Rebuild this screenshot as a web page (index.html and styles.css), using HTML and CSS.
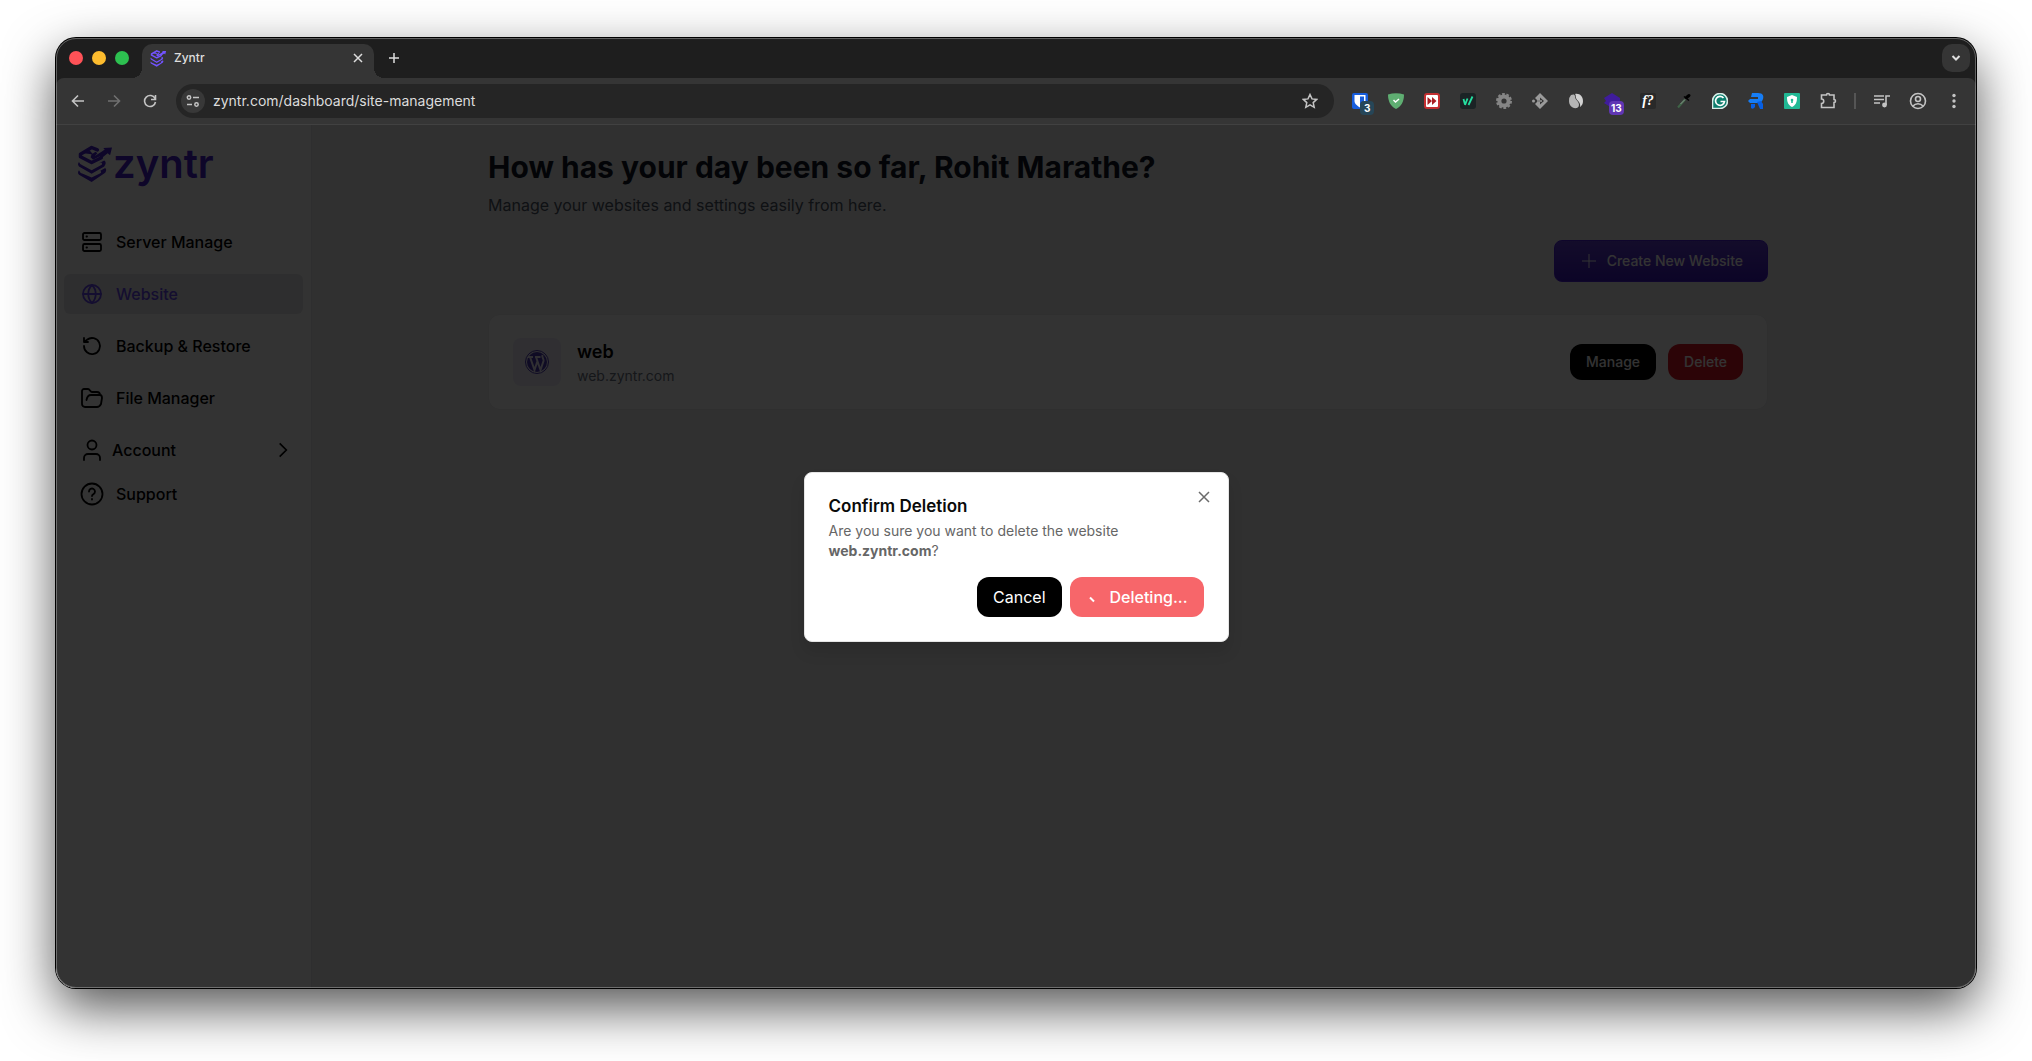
FILE: index.html
```html
<!DOCTYPE html>
<html lang="en">

<head>
  <meta charset="UTF-8">
  <meta name="viewport" content="width=device-width, initial-scale=1.0">
  <title>Zyntr</title>
  <link rel="stylesheet" href="styles.css">
</head>

<body>
  <!-- Shared logo mark -->
  <svg class="symbols" aria-hidden="true">
    <symbol id="zyntr-mark" viewBox="0 0 36 38">
      <path fill="none" stroke="currentColor" stroke-width="3.500" stroke-linejoin="round" stroke-linecap="round" d="M20 4.500L14 2 2.500 9v2.500L14 17.500l10-5" />
      <path fill="currentColor" d="M6 8l6-3 3 3.500 3-2 2 1.500-3 3 8-5 2.500-2L26 2.500 35 2l-2 8-2.500-2-5 4-4 1 1-2-7 3.500L13 12l1-3z" />
      <path fill="currentColor" d="M1 17q1 3 4 3.500l9 5 9-5q3-1 1-3l-3 1 6-3q3 2 0 6L14 29 1 21.500q-2-2 0-4.500z" />
      <path fill="currentColor" d="M1 25.500q1 3 4 3.500l9 4 8-4q3-1 1-3l5-3q2 2 0 5L14 37.500 1 30q-2-2 0-4.500z" />
    </symbol>
  </svg>

  <div class="window">
    <!-- Tab strip -->
    <header class="tab-strip">
      <div class="lights">
        <span class="light red"></span>
        <span class="light yellow"></span>
        <span class="light green"></span>
      </div>
      <div class="tab">
        <svg class="favicon"><use href="#zyntr-mark" /></svg>
        <span class="tab-title">Zyntr</span>
        <button class="tab-close" aria-label="Close tab">
          <svg width="10" height="10" viewBox="0 0 10 10"><path d="M1 1l8 8M9 1L1 9" /></svg>
        </button>
      </div>
      <button class="tab-new" aria-label="New tab">
        <svg width="12" height="12" viewBox="0 0 12 12"><path d="M6 1v10M1 6h10" /></svg>
      </button>
      <button class="tab-search" aria-label="Search tabs">
        <svg width="10" height="8" viewBox="0 0 10 8"><path d="M1.500 2L5 5.500 8.500 2" /></svg>
      </button>
    </header>

    <!-- Toolbar -->
    <div class="toolbar">
      <button class="tool" aria-label="Back">
        <svg width="14" height="14" viewBox="0 0 14 14"><path d="M13 7H2M7 1.500L1.500 7 7 12.500" /></svg>
      </button>
      <button class="tool dim" aria-label="Forward">
        <svg width="14" height="14" viewBox="0 0 14 14"><path d="M1 7h11M7 1.500L12.500 7 7 12.500" /></svg>
      </button>
      <button class="tool" aria-label="Reload">
        <svg width="14" height="14" viewBox="0 0 14 14"><path d="M12 4.500A5.500 5.500 0 1 0 12.500 8M12.500 1v4.500H8" /></svg>
      </button>
      <div class="address">
        <button class="site-info" aria-label="Site information">
          <svg width="14" height="12" viewBox="0 0 14 12"><circle cx="3" cy="2.500" r="1.700" /><path d="M7 2.500h6M1 9.500h5" /><circle cx="10.500" cy="9.500" r="1.700" /></svg>
        </button>
        <input class="url" type="text" aria-label="Address" value="zyntr.com/dashboard/site-management">
        <button class="bookmark" aria-label="Bookmark">
          <svg width="16" height="16" viewBox="0 0 16 16"><path d="M8 1.500l2 4.400 4.700.5-3.500 3.200 1 4.700L8 11.900l-4.200 2.400 1-4.700L1.300 6.400 6 5.900z" /></svg>
        </button>
      </div>
      <div class="extensions">
        <button class="tool" aria-label="Password vault">
          <svg class="fill" viewBox="0 0 16 16"><rect width="16" height="16" rx="2" fill="#175ddc" /><path fill="#fff" d="M2.500 2h11v6c0 3-3 5-5.500 6.500C5.500 13 2.500 11 2.500 8z" /><path fill="#175ddc" d="M8 3.500h4V8c0 2-2 3.500-4 4.500z" /></svg>
          <span class="badge navy">3</span>
        </button>
        <button class="tool" aria-label="Ad blocker">
          <svg class="fill" viewBox="0 0 16 16"><path fill="#5fae72" d="M0 1.500Q8-1 16 1.500C16 9 13 13.500 8 16 3 13.500 0 9 0 1.500z" /><path fill="none" stroke="#fff" stroke-width="1.500" d="M5.500 7l2 2 3.500-3" /></svg>
        </button>
        <button class="tool" aria-label="Fast forward">
          <svg class="fill" viewBox="0 0 16 16"><rect width="16" height="16" rx="3" fill="#c32f31" /><rect x="2" y="2" width="12" height="12" rx="1" fill="#fff" /><path fill="#a81e22" d="M3.500 4L8 8l-4.500 4zM8 4l4.500 4L8 12z" /></svg>
        </button>
        <button class="tool" aria-label="Checker">
          <svg class="fill" viewBox="0 0 16 16"><rect width="16" height="16" rx="3" fill="#1b2325" /><path fill="none" stroke="#25dfa0" stroke-width="1.800" d="M3.500 6l1.500 5.500M5 12l2.500-6.500M8.500 12L12.500 3.500" /></svg>
        </button>
        <button class="tool" aria-label="Options">
          <svg class="fill" viewBox="0 0 16 16"><circle cx="8" cy="8" r="7" fill="none" stroke="#858585" stroke-width="2" stroke-dasharray="2.750 1.650" /><circle cx="8" cy="8" r="4.600" fill="none" stroke="#858585" stroke-width="4" /></svg>
        </button>
        <button class="tool" aria-label="Redirects">
          <svg class="fill" viewBox="0 0 16 16"><path fill="#9a9a9a" d="M8 0l8 8-8 8-5-5 2-2h3v2.500L12 8 8 4.500V7H5L3 5z" /><circle cx="1.500" cy="8" r="1.500" fill="#9a9a9a" /><path stroke="#9a9a9a" stroke-width="1.500" d="M5 8h5" /></svg>
        </button>
        <button class="tool" aria-label="Rank data">
          <svg class="fill" viewBox="0 0 16 16"><path fill="#b5b5b5" d="M3 2c2-1 4-1 4 1.500C7 7 11 8 11 12q0 2-2 3C4 16 1 12 1 8q0-4 2-6z" /><path fill="#d2d2d2" d="M7 1c5-1 8 3 8 7 0 3-1 4.500-3 6 1-5-3-6-4-9-.4-1.500 0-3-1-4z" /></svg>
        </button>
        <button class="tool" aria-label="Layers">
          <svg class="fill" viewBox="0 0 16 16"><path fill="#3f1c9c" d="M8 0l8 5v5l-8 5-8-5 2-2-2-3z" /></svg>
          <span class="badge violet">13</span>
        </button>
        <button class="tool" aria-label="Font finder"><span class="font-ext">f?</span></button>
        <button class="tool" aria-label="Colour picker">
          <svg class="fill" viewBox="0 0 16 16"><path stroke="#3f6447" stroke-width="2" d="M2 14.500l7-8" /><path stroke="#999" stroke-width=".8" d="M4.500 11L9 6.500" /><path stroke="#000" stroke-width="3" stroke-linecap="round" d="M10.500 4.500l2.500-2" /><path stroke="#000" stroke-width="1.500" d="M8 3.500l5 4" /></svg>
        </button>
        <button class="tool" aria-label="Grammar">
          <svg class="fill" viewBox="0 0 16 16"><path fill="#0c7d6c" stroke="#d9eee9" d="M8 .5A7.500 7.500 0 1 1 8 15.500H.5V8A7.500 7.500 0 0 1 8 .5z" /><path fill="none" stroke="#fff" stroke-width="1.700" d="M11.500 5A4.500 4.500 0 1 0 12.500 8.500H8.500" /></svg>
        </button>
        <button class="tool" aria-label="Recorder">
          <svg class="fill" viewBox="0 0 16 16"><path fill="#167df5" d="M4 0h6c5 0 6 3 5 6-1 3-3 4-5 4H2L0 8l2-2h8V4H3z" /><path fill="#075fe4" d="M3 11h4v3q-2 3-4 1zM9 9l4-1 2 3v5h-3z" /></svg>
        </button>
        <button class="tool" aria-label="Privacy shield">
          <svg class="fill" viewBox="0 0 16 16"><rect width="16" height="16" rx="1" fill="#21b894" /><path fill="#fff" d="M3 4l5-2 5 2c0 5-1 8-5 10C4 12 3 9 3 4z" /><circle cx="8" cy="7" r="1.300" fill="#21b894" /><path stroke="#21b894" d="M8 7v3" /></svg>
        </button>
        <button class="tool" aria-label="Extensions">
          <svg width="18" height="18" viewBox="0 0 18 18"><path d="M2.500 3h5a1.500 1.500 0 0 1 3 0H15v4.500a1.500 1.500 0 0 1 0 3v5H2.500v-4a2.200 2.200 0 0 0 0-4.500z" /></svg>
        </button>
      </div>
      <span class="divider"></span>
      <button class="tool" aria-label="Media">
        <svg width="16" height="16" viewBox="0 0 16 16"><path d="M0 3h10M0 6.500h10M0 10h6M12 12V3h4" /><circle cx="10.500" cy="12" r="1.600" fill="currentColor" /></svg>
      </button>
      <button class="tool" aria-label="Profile">
        <svg width="18" height="18" viewBox="0 0 18 18"><circle cx="9" cy="9" r="7.500" /><circle cx="9" cy="7" r="2.500" /><path d="M4 14c2.500-3 7.500-3 10 0" /></svg>
      </button>
      <button class="tool" aria-label="Menu">
        <svg class="fill" viewBox="0 0 16 16"><g fill="currentColor"><circle cx="8" cy="2.500" r="1.700" /><circle cx="8" cy="8" r="1.700" /><circle cx="8" cy="13.500" r="1.700" /></g></svg>
      </button>
    </div>

    <!-- Page -->
    <div class="page">
      <aside class="sidebar">
        <a class="logo" href="#" aria-label="Zyntr home">
          <svg class="logo-mark"><use href="#zyntr-mark" /></svg>
          <span class="logo-text">zyntr</span>
        </a>
        <nav class="nav">
          <a class="nav-link" href="#">
            <svg class="nav-icon" viewBox="0 0 24 24"><rect x="3" y="3" width="18" height="7" rx="1.500" /><rect x="3" y="14" width="18" height="7" rx="1.500" /><path d="M6.500 6.500h.5M6.500 17.500h.5" /></svg>
            Server Manage
          </a>
          <a class="nav-link active" href="#">
            <svg class="nav-icon" viewBox="0 0 24 24"><circle cx="12" cy="12" r="9" /><path d="M3 12h18M12 3c-5 5-5 13 0 18M12 3c5 5 5 13 0 18" /></svg>
            Website
          </a>
          <a class="nav-link" href="#">
            <svg class="nav-icon" viewBox="0 0 24 24"><path d="M4 12a8 8 0 1 0 3-6.200L4 8M4 4v4h4" /></svg>
            Backup &amp; Restore
          </a>
          <a class="nav-link" href="#">
            <svg class="nav-icon" viewBox="0 0 24 24"><path d="M5 21a3 3 0 0 1-3-3V5c0-1 1-2 2-2h4c2 0 2 3 4 3h5c2 0 3 1 3 3M5 21h12c2 0 3-1 4-3l1-6c0-2-1-3-2-3h-9c-3 0-4 2-4.500 5" /></svg>
            File Manager
          </a>
          <button class="nav-link nav-account">
            <svg class="nav-icon" viewBox="0 0 24 24"><circle cx="12" cy="7" r="4.500" /><path d="M4 22v-2a4 4 0 0 1 4-4h8a4 4 0 0 1 4 4v2" /></svg>
            Account
            <svg class="nav-chevron" viewBox="0 0 24 24"><path d="M8 4l8 8-8 8" /></svg>
          </button>
          <a class="nav-link" href="#">
            <svg class="nav-icon" viewBox="0 0 24 24"><circle cx="12" cy="12" r="10.500" /><path d="M9 9.500a3 3 0 1 1 4.500 2.600c-1.100.6-1.500 1-1.500 1.900M12 17v.5" /></svg>
            Support
          </a>
        </nav>
      </aside>

      <main class="main">
        <div class="container">
          <h1 class="greeting">How has your day been so far, Rohit Marathe?</h1>
          <p class="subtitle">Manage your websites and settings easily from here.</p>
          <button class="btn-create">
            <svg width="16" height="16" viewBox="0 0 16 16"><path d="M8 1v14M1 8h14" /></svg>
            Create New Website
          </button>
          <section class="site-card">
            <div class="site-icon">
              <svg width="24" height="24" viewBox="0 0 24 24"><circle cx="12" cy="12" r="11.500" fill="none" stroke="currentColor" /><circle cx="12" cy="12" r="10" fill="currentColor" stroke="none" /><path fill="none" stroke="#eeebfa" stroke-width="2" d="M3 7h5M10 7h5.500M5 7l4.500 13 3-9M11 7l4.500 13 3-9c.6-2-2-3.500-1-6" /></svg>
            </div>
            <div class="site-info-text">
              <h2 class="site-name">web</h2>
              <p class="site-domain">web.zyntr.com</p>
            </div>
            <button class="btn-small">Manage</button>
            <button class="btn-small danger">Delete</button>
          </section>
        </div>
      </main>

      <!-- Delete confirmation -->
      <div class="overlay">
        <div class="dialog" role="dialog" aria-modal="true" aria-labelledby="dialog-title">
          <button class="dialog-close" aria-label="Close">
            <svg width="12" height="12" viewBox="0 0 12 12"><path d="M1 1l10 10M11 1L1 11" /></svg>
          </button>
          <h2 class="dialog-title" id="dialog-title">Confirm Deletion</h2>
          <p class="dialog-text">Are you sure you want to delete the website <strong>web.zyntr.com</strong>?</p>
          <div class="dialog-actions">
            <button class="btn">Cancel</button>
            <button class="btn deleting" disabled>
              <svg width="16" height="16" viewBox="0 0 16 16"><path d="M4 8.500l4 4" /></svg>
              Deleting...
            </button>
          </div>
        </div>
      </div>
    </div>
  </div>
</body>

</html>
```
FILE: styles.css
```css
:root {
  --strip: #1e1e1e;
  --toolbar: #353535;
  --field: #252525;
  --icon: #c4c4c4;
  --brand: #6746ed;
  --brand-dark: #4620cc;
}

* {
  margin: 0;
  padding: 0;
  box-sizing: border-box;
}

body {
  display: flex;
  height: 100vh;
  padding: 38px 56px 73px;
  background: #fff;
  font-family: Inter, "Liberation Sans", sans-serif;
  font-size: 16px;
  line-height: 24px;
  overflow: hidden;
}

button,
input {
  font: inherit;
  color: inherit;
  background: none;
  border: none;
}

a {
  color: inherit;
  text-decoration: none;
}

svg {
  flex: none;
  fill: none;
  stroke: currentColor;
}

.symbols {
  position: absolute;
  width: 0;
  height: 0;
}

/* Window */
.window {
  position: relative;
  flex: 1;
  min-width: 0;
  display: flex;
  flex-direction: column;
  border-radius: 20px;
  background: var(--strip);
  box-shadow: 0 0 0 1px #000, 0 20px 52px rgba(0, 0, 0, 0.68);
}

.window::after {
  content: "";
  position: absolute;
  inset: 0;
  border: 1px solid rgba(255, 255, 255, 0.3);
  border-radius: 20px;
  pointer-events: none;
}

/* Tab strip */
.tab-strip {
  display: flex;
  align-items: center;
  height: 40px;
  padding: 0 6px 0 13px;
  color: #dedede;
}

.lights {
  display: flex;
  gap: 9px;
  margin-right: 13px;
}

.light {
  width: 14px;
  height: 14px;
  border-radius: 50%;
}

.red { background: #ff5257; }
.yellow { background: #fdbc2e; }
.green { background: #2dc050; }

.tab {
  position: relative;
  display: flex;
  align-items: center;
  align-self: flex-end;
  width: 232px;
  height: 34px;
  padding: 0 8px 6px;
  border-radius: 10px 10px 0 0;
  background: var(--toolbar);
}

/* curved feet of the tab */
.tab::before,
.tab::after {
  content: "";
  position: absolute;
  bottom: 0;
  width: 10px;
  height: 10px;
}

.tab::before {
  left: -10px;
  background: radial-gradient(circle at 0 0, transparent 10px, var(--toolbar) 10px);
}

.tab::after {
  right: -10px;
  background: radial-gradient(circle at 100% 0, transparent 10px, var(--toolbar) 10px);
}

.favicon {
  width: 17px;
  height: 17px;
  color: #7353ff;
  stroke: none;
}

.tab-title {
  flex: 1;
  margin-left: 7px;
  font-size: 12px;
  font-weight: 500;
  line-height: 16px;
}

.tab-close,
.tab-new,
.tab-search {
  display: flex;
  align-items: center;
  justify-content: center;
  width: 16px;
  height: 16px;
}

.tab-close svg,
.tab-new svg {
  stroke-width: 1.5px;
}

.tab-new {
  width: 28px;
  height: 28px;
  margin-left: 6px;
}

.tab-search {
  width: 28px;
  height: 28px;
  margin-left: auto;
  border-radius: 10px;
  background: var(--toolbar);
}

.tab-search svg {
  stroke-width: 2px;
}

/* Toolbar */
.toolbar {
  display: flex;
  align-items: center;
  height: 47px;
  padding: 0 4px;
  border-bottom: 1px solid #414141;
  border-radius: 8px 8px 0 0;
  background: var(--toolbar);
  color: var(--icon);
}

.tool {
  position: relative;
  display: flex;
  flex: none;
  align-items: center;
  justify-content: center;
  width: 36px;
  height: 34px;
}

.tool svg {
  stroke-width: 1.6px;
}

.tool .fill {
  width: 16px;
  height: 16px;
  stroke: none;
}

.dim {
  color: #707070;
}

.address {
  display: flex;
  flex: 1;
  align-items: center;
  height: 34px;
  margin: 0 8px;
  padding: 0 5px;
  border-radius: 17px;
  background: var(--field);
}

.site-info {
  display: flex;
  align-items: center;
  justify-content: center;
  width: 24px;
  height: 24px;
  border-radius: 50%;
  background: #383838;
}

.site-info svg,
.bookmark svg {
  stroke-width: 1.5px;
}

.url {
  flex: 1;
  min-width: 0;
  margin-left: 8px;
  color: #dcdcdc;
  font-size: 14px;
  line-height: 20px;
}

.bookmark {
  display: flex;
  justify-content: center;
  width: 38px;
}

.extensions {
  display: flex;
}

.badge {
  position: absolute;
  top: 17px;
  left: 18px;
  height: 14px;
  padding: 0 4px;
  border-radius: 4px;
  background: #264658;
  color: #fff;
  font-size: 10px;
  font-weight: 700;
  line-height: 14px;
}

.violet {
  left: 15px;
  padding: 0 2px;
  background: #6036b4;
}

.font-ext {
  width: 16px;
  height: 16px;
  border-radius: 2px;
  background: #292929;
  color: #fff;
  font-family: "Liberation Serif", serif;
  font-size: 14px;
  font-style: italic;
  font-weight: 700;
  line-height: 15px;
}

.divider {
  width: 2px;
  height: 16px;
  margin: 0 8px;
  background: #555;
}

/* Page */
.page {
  position: relative;
  display: flex;
  flex: 1;
  min-height: 0;
  border-radius: 0 0 20px 20px;
  background: #f0f0f1;
  overflow: hidden;
}

.sidebar {
  width: 256px;
  padding: 19px 8px;
  border-right: 1px solid #e5e7eb;
  background: #fff;
}

.logo {
  display: flex;
  align-items: center;
  height: 40px;
  margin: 0 14px 38px;
  color: var(--brand-dark);
}

.logo-mark {
  width: 35px;
  height: 38px;
  stroke: none;
}

.logo-text {
  font-size: 40px;
  font-weight: 600;
  line-height: 40px;
}

.nav {
  display: flex;
  flex-direction: column;
  gap: 12px;
}

.nav-link {
  display: flex;
  align-items: center;
  gap: 12px;
  height: 40px;
  padding: 0 16px;
  border-radius: 6px;
  color: #000;
  font-weight: 500;
}

.nav-link.active {
  background: #e6e6e8;
  color: var(--brand);
}

.nav-icon {
  width: 24px;
  height: 24px;
  stroke-width: 1.8px;
  stroke-linecap: round;
  stroke-linejoin: round;
}

.nav-account {
  gap: 8px;
  margin-bottom: -8px;
}

.nav-chevron {
  width: 20px;
  height: 20px;
  margin-left: auto;
  margin-right: -6px;
  stroke-width: 2px;
}

.main {
  flex: 1;
  min-width: 0;
  padding: 24px 40px 0 8px;
}

.container {
  display: flex;
  flex-direction: column;
  max-width: 1280px;
  margin: 0 auto;
}

.greeting {
  color: #111827;
  font-size: 30px;
  font-weight: 700;
  line-height: 36px;
}

.subtitle {
  margin-top: 8px;
  color: #4b5563;
}

.btn-create {
  display: flex;
  align-items: center;
  align-self: flex-end;
  gap: 10px;
  height: 42px;
  margin: 23px 0 32px;
  padding: 0 24px 0 26px;
  border: 1px solid #4c22d8;
  border-radius: 8px;
  background: linear-gradient(#6340d4, #3c16bf);
  color: #fff;
  font-size: 14px;
  font-weight: 500;
}

.site-card {
  display: flex;
  align-items: center;
  gap: 12px;
  padding: 23px 24px;
  border: 1px solid #e8e8ea;
  border-radius: 12px;
  background: #fff;
}

.site-icon {
  display: flex;
  align-items: center;
  justify-content: center;
  width: 48px;
  height: 48px;
  border-radius: 8px;
  background: #eeebfa;
  color: #4d38b4;
}

.site-info-text {
  flex: 1;
  margin-left: 4px;
}

.site-name {
  color: #000;
  font-size: 18px;
  font-weight: 600;
  line-height: 28px;
}

.site-domain {
  color: #6b7280;
  font-size: 14px;
  line-height: 20px;
}

.btn-small {
  height: 36px;
  padding: 0 16px;
  border-radius: 12px;
  background: #000;
  color: #fff;
  font-size: 14px;
  font-weight: 500;
  line-height: 20px;
}

.danger {
  background: #dc1827;
}

/* Dialog */
.overlay {
  position: absolute;
  inset: 0;
  display: flex;
  align-items: center;
  justify-content: center;
  background: rgba(0, 0, 0, 0.8);
}

.dialog {
  position: relative;
  width: 425px;
  padding: 24px;
  border: 1px solid #e5e5e5;
  border-radius: 8px;
  background: #fff;
  box-shadow: 0 10px 15px rgba(0, 0, 0, 0.1);
}

.dialog-close {
  position: absolute;
  top: 18px;
  right: 18px;
  display: flex;
  color: #6b6b6b;
}

.dialog-close svg {
  stroke-width: 1.5px;
}

.dialog-title {
  color: #0a0a0a;
  font-size: 17px;
  font-weight: 600;
  line-height: 18px;
}

.dialog-text {
  margin: 6px 0 16px;
  color: #666;
  font-size: 14px;
  line-height: 20px;
}

.dialog-actions {
  display: flex;
  justify-content: flex-end;
  gap: 8px;
}

.btn {
  display: flex;
  align-items: center;
  gap: 8px;
  height: 40px;
  padding: 0 16px;
  border-radius: 12px;
  background: #000;
  color: #fff;
}

.deleting {
  background: #f7666a;
  font-weight: 500;
}

.deleting svg {
  stroke-width: 2px;
}
```
